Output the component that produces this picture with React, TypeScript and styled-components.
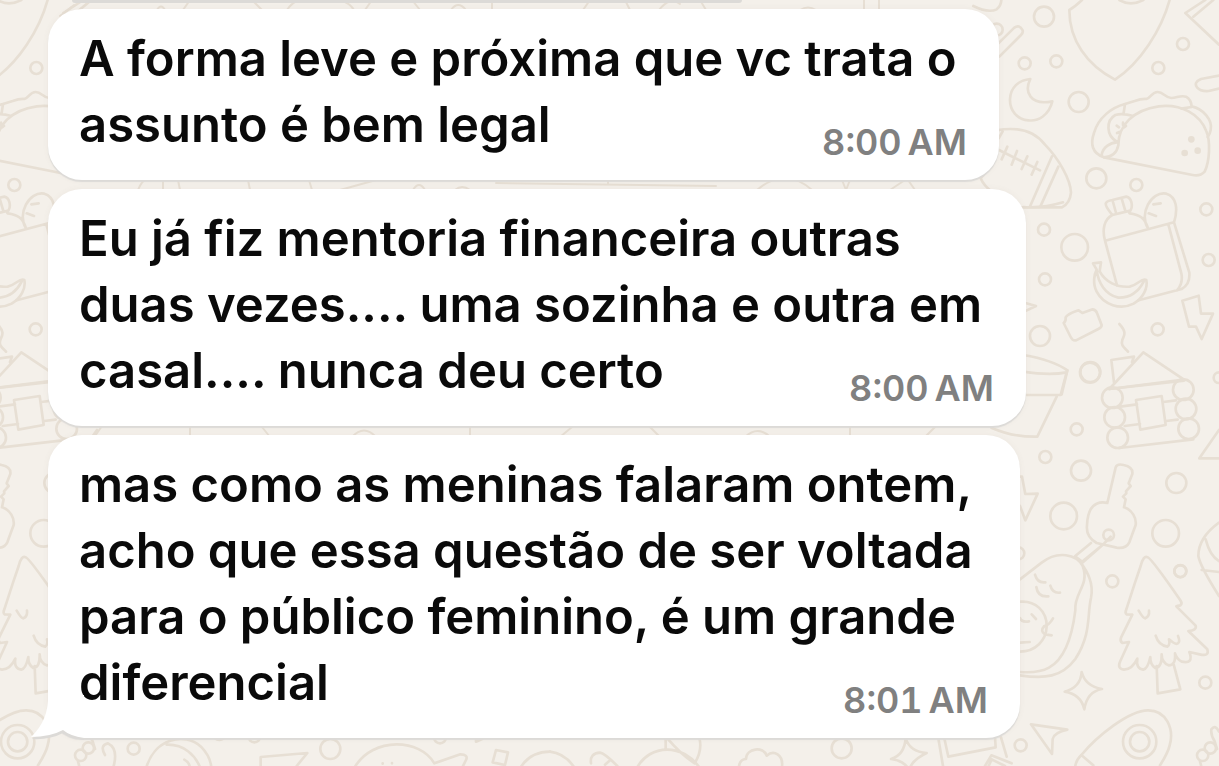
import React from "react";
import styled, { createGlobalStyle } from "styled-components";

const GlobalStyle = createGlobalStyle`
  *, *::before, *::after { box-sizing: border-box; }
  html, body, #root { height: 100%; }
  body {
    margin: 0;
    background: #f4f0ea;
    font-family: Inter, "Liberation Sans", sans-serif;
    color: #0a0a0a;
  }
`;

const Screen = styled.main`
  position: relative;
  isolation: isolate;
  min-height: 100%;
  overflow: hidden;
  display: flex;
  flex-direction: column;
`;

const Wallpaper = styled.svg`
  position: absolute;
  inset: 0;
  z-index: -1;
  width: 100%;
  height: 100%;
  fill: none;
  stroke: #e7dfd4;
  stroke-linecap: round;
  stroke-linejoin: round;
`;

const PreviousBubble = styled.div`
  width: 55%;
  height: 3px;
  margin-left: 72px;
  background: #dcdad7;
  border-radius: 0 0 8px 8px;
`;

const Thread = styled.ol`
  list-style: none;
  margin: 0;
  padding: 6px 48px 28px;
  display: flex;
  flex-direction: column;
  align-items: flex-start;
  gap: 9px;
`;

const Bubble = styled.li<{ $width: number }>`
  position: relative;
  width: 100%;
  max-width: ${(p) => p.$width}px;
  padding: 17px 32px 18px 31px;
  background: #fff;
  border-radius: 34px;
  box-shadow: 0 2px 1px #dcdad7, 0 0 6px rgba(120, 100, 80, 0.06);
`;

const Message = styled.p`
  display: flow-root;
  margin: 0;
  font-size: 49px;
  line-height: 66px;
  font-weight: 600;
`;

const Line = styled.span`
  & + &::before {
    content: "\\A";
    white-space: pre;
  }
`;

const Time = styled.time`
  float: right;
  margin-top: 30px;
  font-size: 36px;
  line-height: 40px;
  font-weight: 600;
  font-variant-numeric: tabular-nums;
  color: #808080;
  white-space: nowrap;
`;

const Tail = styled.svg`
  position: absolute;
  left: -18px;
  bottom: -3px;
  width: 54px;
  height: 46px;
`;

type Dot = [number, number, number];

function Dots({ items }: { items: Dot[] }) {
  return (
    <>
      {items.map(([x, y, r]) => (
        <circle key={`${x}-${y}`} cx={x} cy={y} r={r} />
      ))}
    </>
  );
}

/* One repeat of the doodle wallpaper; each group is drawn on a grid three times finer than the page. */
function Doodles() {
  return (
    <g id="doodles" strokeWidth="8">
      <g transform="translate(980 0) scale(.33333)">
        <Dots items={[[192, 50, 30], [50, 89, 18], [134, 190, 18], [229, 184, 18], [609, 132, 18], [535, 204, 18], [296, 306, 30], [349, 535, 30], [469, 555, 18]]} />
        <path d="M-20 18Q25 40 50 28Q66 15 64 -8M40 145L103 83Q118 72 128 91Q130 98 123 105L58 170M306 0Q285 20 268 30C268 120 320 195 405 239C480 190 545 90 570 -4M418 0Q452 20 490 0" />
        <path d="M676 0L616 39L717 134M700 0L640 50M717 227L663 237Q640 247 651 262Q662 275 686 273L717 266" />
        <path d="M151 237C132 275 150 318 217 304C208 345 174 365 145 361C111 358 89 331 90 298C91 263 116 240 151 237Z" />
        <path d="M372 472C335 460 331 430 342 399C354 354 395 322 435 312L464 303Q484 296 499 297C515 292 515 276 533 276C551 276 556 294 574 294C590 294 601 285 618 290Q633 298 635 319C669 326 699 360 692 390Q690 402 683 411" />
        <path d="M435 312L431 339M604 326L635 321M372 472L638 525Q660 530 674 515C689 484 692 424 679 394C660 342 604 311 536 319C460 330 415 375 415 436C410 462 391 471 372 472ZM365 465C368 442 391 428 410 427M412 426C377 407 378 361 406 345Q427 339 460 348M410 377l7 5M411 399l7-3M429 368v7M432 382l6-4" />
        <g fill="#e7dfd4" stroke="none"><circle cx="634" cy="418" r="10" /><circle cx="614" cy="459" r="10" /><circle cx="653" cy="452" r="10" /></g>
        <path d="M50 391Q147 373 195 434C235 475 272 538 273 578Q270 610 246 622L120 622Q20 580 2 535L22 510M68 394L56 415M57 450L180 511M82 440l-17 38M111 453l-16 41M142 469l-17 38M172 486l-17 38M216 469L149 622M235 500L180 622" />
      </g>
      <g transform="translate(980 190) scale(.33333)">
        <Dots items={[[192, 119, 18], [679, 58, 18], [284, 172, 40], [195, 268, 18], [686, 210, 18], [533, 418, 18], [180, 438, 30], [331, 546, 30], [717, 563, 16]]} />
        <path d="M130 51Q190 55 249 37M375 152C366 119 372 88 397 75L390 66C371 41 373 34 397 30L439 20C455 23 459 48 452 60Q446 68 449 70C480 74 495 85 504 115M399 36l10 36M426 29l10 34M397 75L451 62M504 115C476 73 513 2 559 11C589 20 595 56 582 97M520 43l22-3M506 70l22 8M375 152L582 97L628 248Q631 282 605 297L476 331M411 286L375 152M565 103L604 250Q610 280 591 301" />
        <path d="M339 220L363 217L359 244C376 276 411 293 449 290C477 283 484 263 499 270C504 294 490 323 461 341C421 361 371 345 350 305C337 280 343 252 350 239ZM350 239C354 278 376 314 415 323C452 324 476 304 491 275" />
        <path d="M607 332L656 317L663 371L699 371L665 447L648 410L627 410ZM251 399Q258 395 257 382Q264 372 287 364L296 361L307 369L338 358Q348 360 351 369L365 405Q365 413 355 417L288 451Q278 453 272 441ZM418 402C444 430 430 438 427 450C421 468 435 474 444 485M139 340L168 348L139 362" />
        <path d="M130 495Q218 510 262 541L245 613M130 545Q210 557 260 547M388 597L612 569L490 487L388 597M394 510L462 500L456 516M394 510L402 577" />
        <path d="M130 615H242Q252 575 262 541M230 620L172 740Q100 742 34 713" />
      </g>
      <g transform="translate(980 380) scale(.33333)">
        <Dots items={[[397, 53, 31], [404, 112, 31], [413, 173, 31], [610, 29, 31], [618, 87, 31], [626, 146, 31], [290, 148, 18], [196, 231, 18], [303, 272, 30], [589, 309, 30], [251, 408, 40], [557, 460, 40], [601, 573, 18], [330, -22, 30], [386, 465, 16], [115, 520, 18]]} />
        <path d="M388 27L612 2M421 80L471 73M550 66L588 61M434 138L480 132M558 123L593 119M418 204L640 178M468 60L545 48L557 135L481 149ZM717 150L658 235H717M120 290H126L136 342L173 341L136 421L120 378" />
        <path d="M382 369L407 262Q411 250 431 255Q460 261 457 282L446 310L452 318L438 334L439 340L429 350L437 358L432 382C456 389 470 414 467 435L448 487Q438 507 410 503L350 489Q317 470 321 436Q323 383 350 371Q365 364 382 369ZM392 470L371 492L306 545L285 529L333 489M371 492L307 548" />
      </g>
      <g transform="translate(980 566) scale(.33333)">
        <Dots items={[[397, 46, 18], [601, 16, 18], [122, 538, 18], [676, 350, 18], [479, 527, 50], [479, 527, 29], [668, 568, 17], [691, 546, 17]]} />
        <path d="M120 40L185 -10C233 -48 290 -35 308 0C330 57 281 81 286 133C279 190 261 275 207 305Q177 322 120 318M302 -10C322 17 342 51 333 96C321 145 335 203 286 279C245 334 194 339 120 328M120 107C166 103 201 136 200 181C199 223 166 257 120 257M165 26Q172 52 196 49M169 63Q173 94 205 91M211 59Q218 83 240 80M120 156Q125 170 147 166M155 145l13 14M120 230L149 228M219 157Q207 178 193 180Q179 195 195 205L215 208" />
        <path d="M465 50L482 0Q490 -33 503 -26Q514 -23 601 103Q608 113 601 118Q592 120 589 121L647 179Q651 193 625 195L682 250Q689 272 659 265L628 258Q642 295 605 287Q590 279 585 262Q588 298 566 298Q545 290 545 265Q546 305 526 306Q510 296 511 273Q503 309 490 311Q467 308 472 278Q457 310 432 311Q410 308 421 285L447 228L427 231Q419 225 423 215L457 146L440 145Q434 141 439 130L465 50M476 134Q490 158 496 157Q509 151 507 134M527 209Q535 237 562 242Q571 236 567 220Q587 238 594 232Q601 226 594 210M530 300L533 382L601 370L581 295" />
        <path d="M717 -130Q655 -85 655 -30Q660 0 717 90M677 -80Q690 -30 717 -15M665 12L717 18" />
        <path d="M305 318Q316 361 366 369Q321 377 313 430Q303 385 254 377Q302 364 305 318ZM153 475L262 491Q222 500 218 519L216 564L153 475M285 610Q285 585 304 567C350 512 447 432 505 433C559 433 583 489 569 538Q564 560 540 598M304 567L340 598M717 497Q706 474 694 490Q692 507 704 526L711 549M660 586L665 606" />
      </g>
      <g transform="translate(100 700) scale(.33333)">
        <Dots items={[[101, 146, 18], [463, 109, 18], [691, 147, 30], [1020, 112, 18], [358, 102, 18]]} />
        <path d="M15 165Q-2 135 24 130Q55 145 41 198M137 210C160 115 255 95 303 140Q332 170 334 204M200 134C250 132 287 164 302 207M253 179Q270 188 269 204M482 198V171L622 159L590 198M765 200C820 110 960 115 1003 190L1081 163Q1106 164 1098 180L1088 200M848 190v1M876 189v1M1188 150L1224 157L1215 195L1178 187ZM1260 205Q1290 155 1350 155M1128 118V125L1148 116" />
      </g>
      <g transform="translate(540 700) scale(.33333)">
        <Dots items={[[905, 145, 30]]} />
        <path d="M30 155Q75 160 104 204M153 190Q149 160 180 158Q194 160 232 198M195 194L211 180M290 205C330 130 430 130 480 205M377 112V145M382 115Q425 165 464 190Q488 150 478 114M597 200Q599 178 618 177C619 144 671 138 680 167C702 148 730 165 726 200M1097 115Q1110 155 1160 159Q1115 180 1108 210Q1090 180 1053 177Q1093 165 1097 115ZM1195 115L1209 198M1213 115L1225 170L1367 142L1365 110M1383 112L1400 170M1335 198L1354 166L1415 190M1355 178L1345 200M1355 178L1395 198" />
      </g>
      <g strokeWidth="2">
        <path d="M74 5L60 16M157 10Q161 3 165 10M183 10L190 0M252 0L262 10M287 10Q292 2 300 0M340 0Q350 3 354 10M365 10L372 0M412 0L420 10M451 10Q458 0 466 10M492 0V10M583 10L590 0M625 0L630 10M659 10Q670 -4 680 4M700 0L706 10M800 10Q808 5 816 10M864 0V10M879 0V10" />
        <path d="M138 190Q142 180 148 178M163 180V190M178 180L180 190M248 180L250 190M309 180L312 190M340 190L376 180M413 190Q419 180 425 190M455 190Q462 184 470 190M496 183L716 186M608 178V184M757 190Q785 166 812 190M842 180L846 190L850 180M890 190L905 180M915 190L908 180" />
        <path d="M95 436L102 426M190 427V437M262 427L270 437M352 437Q364 424 376 437M470 427V437M560 437L572 427M650 427L660 437M745 437Q758 425 770 437M850 427V437M925 437L935 427" />
      </g>
    </g>
  );
}

const messages = [
  {
    lines: ["A forma leve e próxima que vc trata o", "assunto é bem legal"],
    time: "8:00\u202fAM",
    width: 951,
  },
  {
    lines: [
      "Eu já fiz mentoria financeira outras",
      "duas vezes.... uma sozinha e outra em",
      "casal.... nunca deu certo",
    ],
    time: "8:00\u202fAM",
    width: 978,
  },
  {
    lines: [
      "mas como as meninas falaram ontem,",
      "acho que essa questão de ser voltada",
      "para o público feminino, é um grande",
      "diferencial",
    ],
    time: "8:01\u202fAM",
    width: 972,
  },
];

export default function App() {
  return (
    <>
      <GlobalStyle />
      <Screen>
        <Wallpaper aria-hidden="true">
          <Doodles />
          <use href="#doodles" x="-1122" />
        </Wallpaper>
        <PreviousBubble />
        <Thread>
          {messages.map((m, i) => (
            <Bubble key={m.lines[0]} $width={m.width}>
              <Message>
                {m.lines.map((line) => (
                  <Line key={line}>{line}</Line>
                ))}
                <Time>{m.time}</Time>
              </Message>
              {i === messages.length - 1 && (
                <Tail viewBox="0 0 54 46" aria-hidden="true">
                  <path d="M2 44Q20 45 33 38Q40 43 54 45V30H20Z" fill="#dcdad7" />
                  <path d="M18 0Q19 25 1 42Q20 42 33 35Q40 41 54 43V0Z" fill="#fff" />
                </Tail>
              )}
            </Bubble>
          ))}
        </Thread>
      </Screen>
    </>
  );
}
